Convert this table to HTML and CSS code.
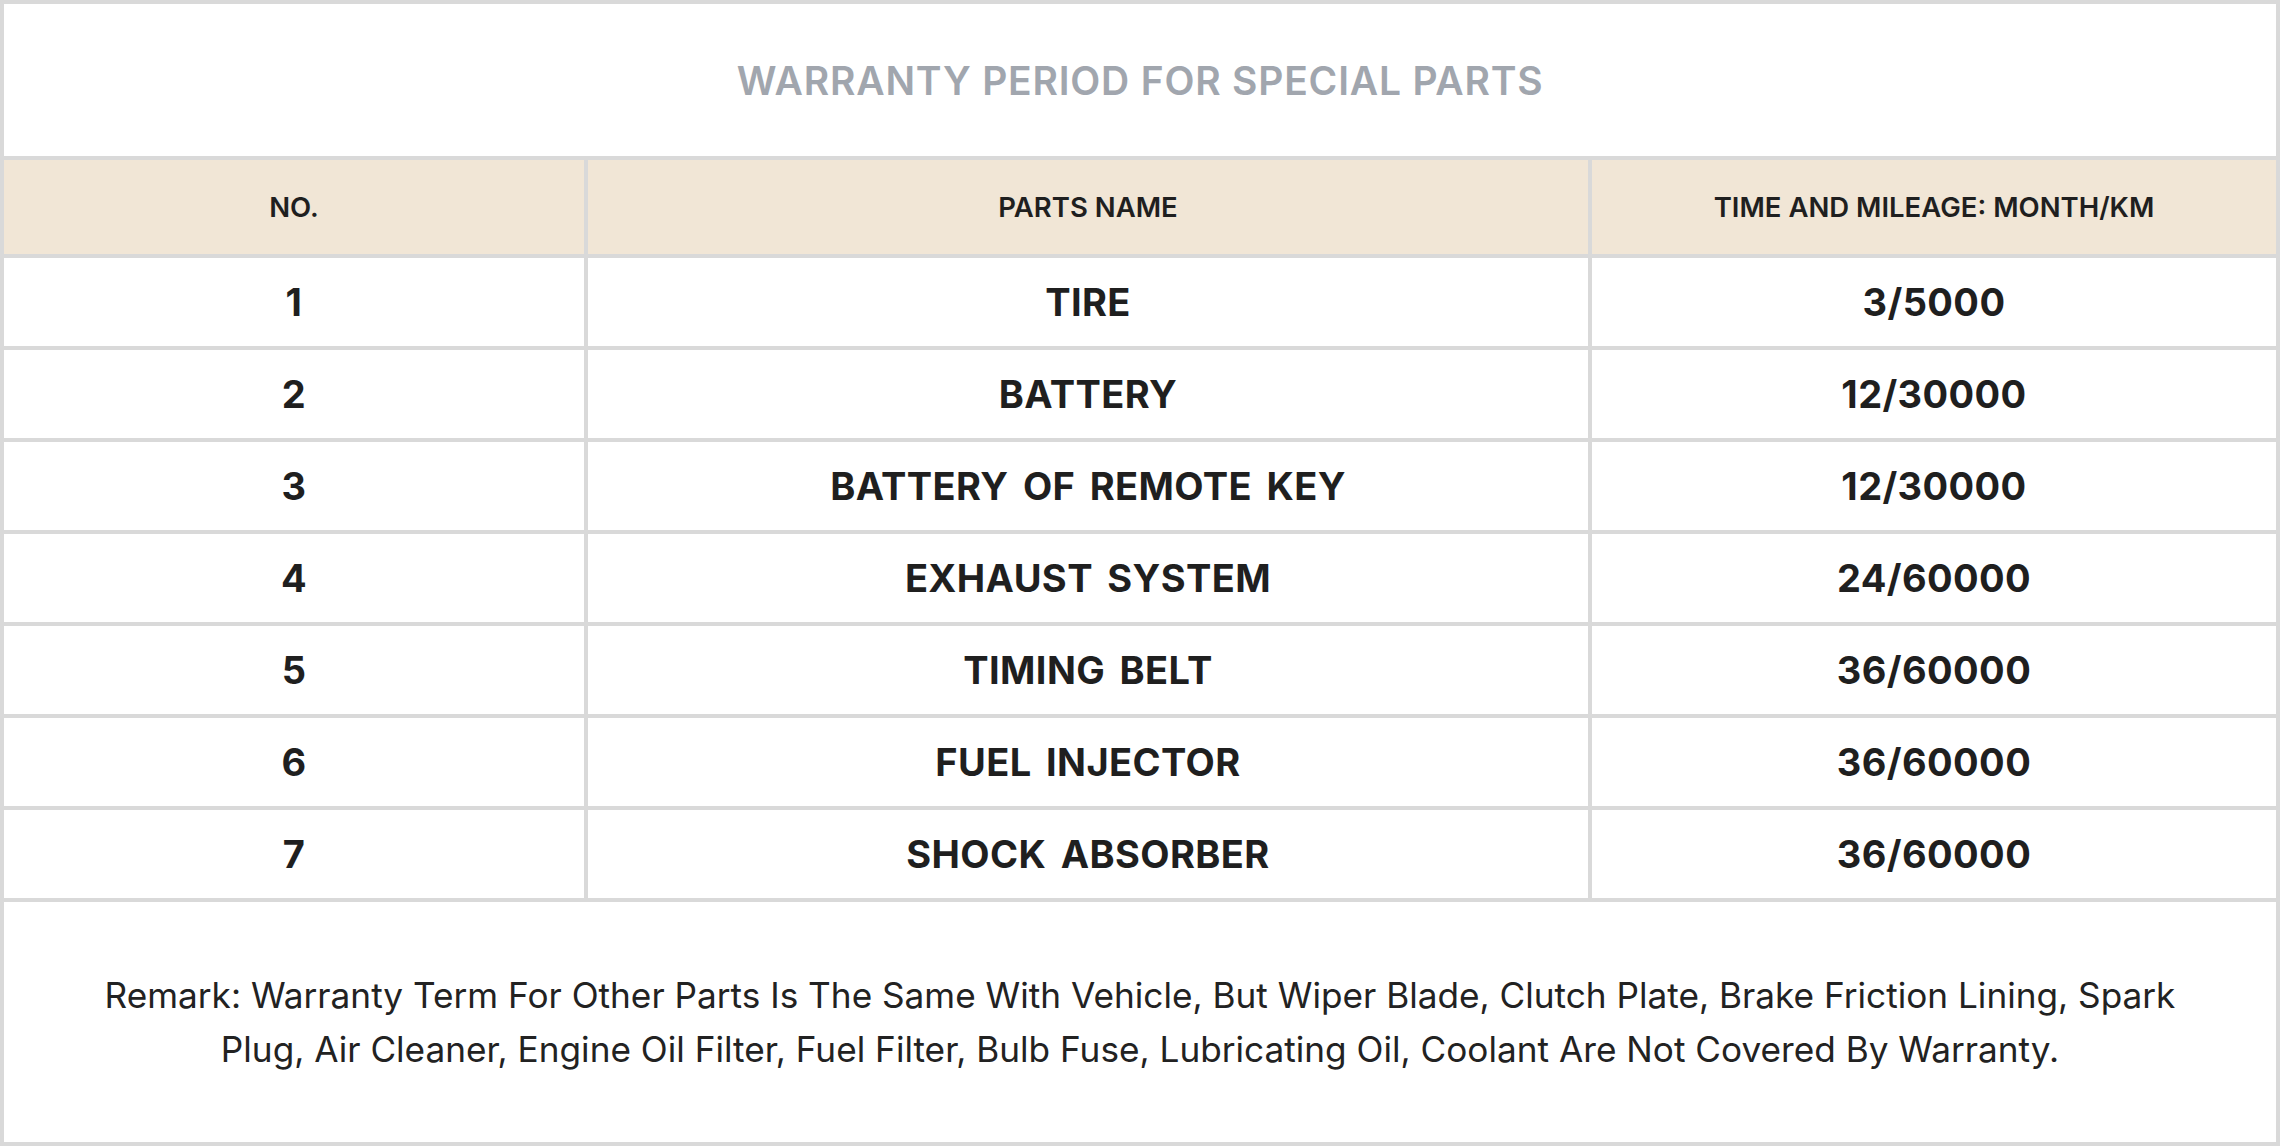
FILE: index.html
```html
<!DOCTYPE html>
<html lang="en">
<head>
<meta charset="utf-8">
<title>Warranty Period For Special Parts</title>
<link rel="stylesheet" href="styles.css">
</head>
<body>
<div class="sheet">
  <div class="title">WARRANTY PERIOD FOR SPECIAL PARTS</div>
  <div class="th">NO.</div>
  <div class="th">PARTS NAME</div>
  <div class="th">TIME AND MILEAGE: MONTH/KM</div>

  <div class="td">1</div><div class="td">TIRE</div><div class="td">3/5000</div>
  <div class="td">2</div><div class="td">BATTERY</div><div class="td">12/30000</div>
  <div class="td">3</div><div class="td">BATTERY OF REMOTE KEY</div><div class="td">12/30000</div>
  <div class="td">4</div><div class="td">EXHAUST SYSTEM</div><div class="td">24/60000</div>
  <div class="td">5</div><div class="td">TIMING BELT</div><div class="td">36/60000</div>
  <div class="td">6</div><div class="td">FUEL INJECTOR</div><div class="td">36/60000</div>
  <div class="td">7</div><div class="td">SHOCK ABSORBER</div><div class="td">36/60000</div>

  <div class="remark"><p>Remark: Warranty Term For Other Parts Is The Same With Vehicle, But Wiper Blade, Clutch Plate, Brake Friction Lining, Spark Plug, Air Cleaner, Engine Oil Filter, Fuel Filter, Bulb Fuse, Lubricating Oil, Coolant Are Not Covered By Warranty.</p></div>
</div>
</body>
</html>
```
FILE: styles.css
```css
html, body {
  margin: 0;
  padding: 0;
  background: #ffffff;
}

body {
  font-family: Inter, "Open Sans", "Liberation Sans", sans-serif;
  color: #1f1f1f;
}

.sheet {
  width: 2280px;
  height: 1146px;
  box-sizing: border-box;
  border: 4px solid #d9d9d9;
  background: #d9d9d9;
  display: grid;
  grid-template-columns: 580px 1000px 684px;
  grid-template-rows: 152px 94px repeat(7, 88px) 240px;
  gap: 4px;
}

.title {
  grid-column: 1 / -1;
  background: #ffffff;
  display: flex;
  align-items: center;
  justify-content: center;
  font-size: 39px;
  font-weight: 600;
  color: #a1a6ae;
  letter-spacing: 0.8px;
}

.th {
  background: #f1e6d6;
  display: flex;
  align-items: center;
  justify-content: center;
  font-size: 27.5px;
  font-weight: 600;
  color: #1f1f1f;
}

.td {
  background: #ffffff;
  display: flex;
  align-items: center;
  justify-content: center;
  font-size: 38px;
  font-weight: 700;
  letter-spacing: 0.4px;
  word-spacing: 5px;
  color: #1f1f1f;
}

.remark {
  grid-column: 1 / -1;
  background: #ffffff;
  display: flex;
  align-items: center;
  justify-content: center;
  padding: 0 80px;
}

.remark p {
  margin: 0;
  text-align: center;
  font-size: 35.2px;
  line-height: 54px;
  font-weight: 400;
  color: #222222;
}
```
